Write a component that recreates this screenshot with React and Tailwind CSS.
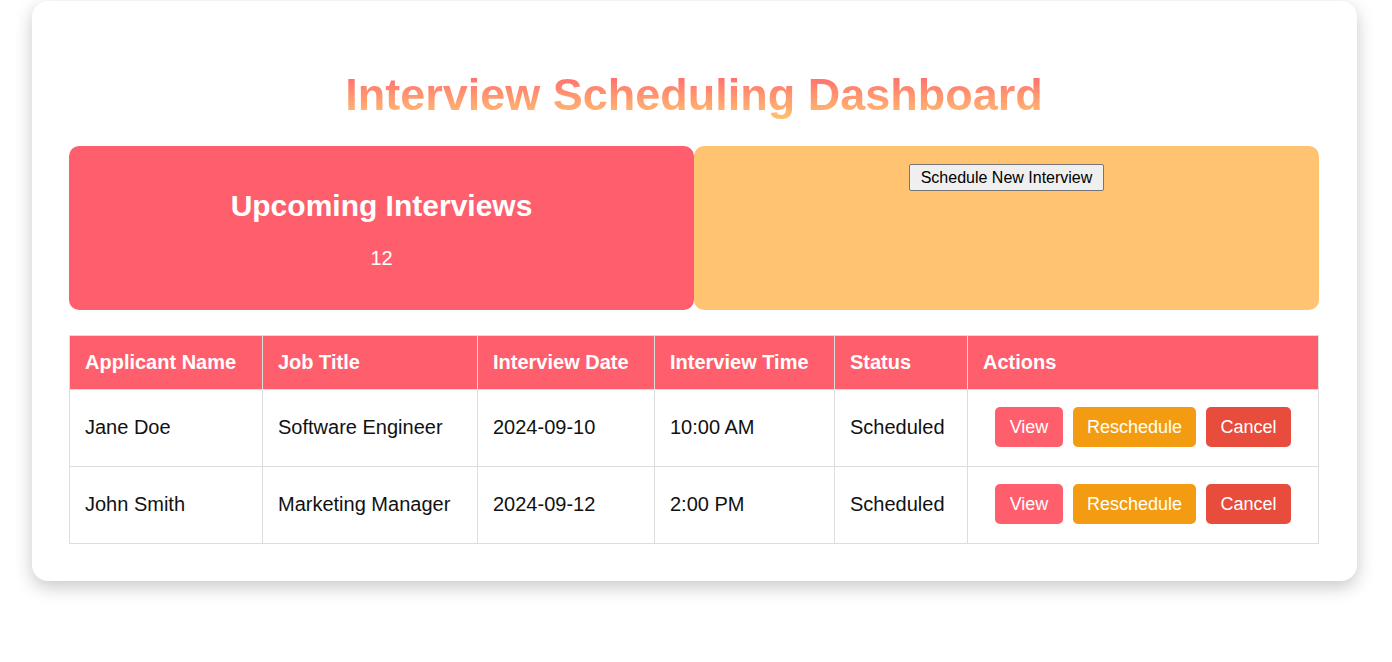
import React from "react";

const rows = [
	{ name: "Jane Doe", job: "Software Engineer", date: "2024-09-10", time: "10:00 AM", status: "Scheduled" },
	{ name: "John Smith", job: "Marketing Manager", date: "2024-09-12", time: "2:00 PM", status: "Scheduled" },
];

export default function App() {
	return (
		<div className="min-h-[662px] bg-white font-['Liberation_Sans',Arial,sans-serif]">
			{/* dashboard card */}
			<div className="ml-[32px] mt-px w-[1325px] rounded-[16px] bg-white pl-[37px] pr-[38px] pt-[37px] pb-[37px] shadow-[0_6px_18px_rgba(0,0,0,0.22)]">
				<h1 className="mt-[32px] mb-[26px] bg-gradient-to-b from-[#ff5f6d] to-[#ffc371] bg-clip-text text-center text-[45px] font-bold leading-[50px] text-transparent">
					Interview Scheduling Dashboard
				</h1>

				<div className="flex">
					<div className="flex-1 rounded-[10px] bg-[#ff5f6d] px-[20px] pt-[20px] pb-[20px] text-center text-white">
						<h2 className="mt-[23px] mb-[24px] text-[30px] font-bold leading-[34px]">Upcoming Interviews</h2>
						<p className="mb-[20px] text-[20px] leading-[23px]">12</p>
					</div>
					<div className="flex-1 rounded-[10px] bg-[#ffc371] px-[20px] pt-[18px] text-center">
						<button className="h-[27px] rounded-[2px] border border-[#767676] bg-[#efefef] px-[11px] text-[16px] leading-[19px] text-black">
							Schedule New Interview
						</button>
					</div>
				</div>

				<table className="mt-[25px] w-full table-fixed border-collapse text-[20px]">
					<colgroup>
						<col className="w-[193px]" />
						<col className="w-[215px]" />
						<col className="w-[177px]" />
						<col className="w-[180px]" />
						<col className="w-[133px]" />
						<col />
					</colgroup>
					<thead>
						<tr className="bg-[#ff5f6d] text-white">
							{["Applicant Name", "Job Title", "Interview Date", "Interview Time", "Status", "Actions"].map((h) => (
								<th key={h} className="h-[54px] border border-[#ddd] px-[15px] text-left font-bold leading-[23px]">
									{h}
								</th>
							))}
						</tr>
					</thead>
					<tbody>
						{rows.map((r) => (
							<tr key={r.name} className="text-[#111]">
								<td className="h-[77px] border border-[#ddd] px-[15px] pb-[2px]">{r.name}</td>
								<td className="border border-[#ddd] px-[15px] pb-[2px]">{r.job}</td>
								<td className="border border-[#ddd] px-[15px] pb-[2px]">{r.date}</td>
								<td className="border border-[#ddd] px-[15px] pb-[2px]">{r.time}</td>
								<td className="border border-[#ddd] px-[15px] pb-[2px]">{r.status}</td>
								<td className="border border-[#ddd] px-[15px] pb-[2px]">
									<div className="flex justify-center gap-[10px] text-[18px] text-white">
										<button className="h-[40px] w-[68px] rounded-[5px] bg-[#ff5f6d]">View</button>
										<button className="h-[40px] w-[123px] rounded-[5px] bg-[#f39c12]">Reschedule</button>
										<button className="h-[40px] w-[85px] rounded-[5px] bg-[#e74c3c]">Cancel</button>
									</div>
								</td>
							</tr>
						))}
					</tbody>
				</table>
			</div>
		</div>
	);
}
